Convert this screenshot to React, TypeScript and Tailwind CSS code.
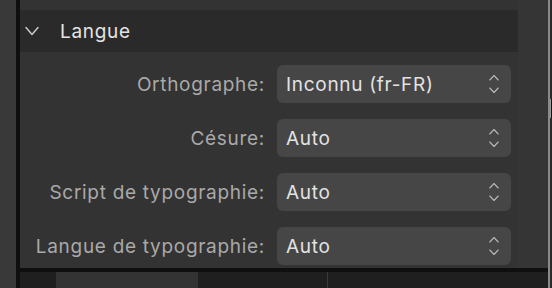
const rows = [
  { label: 'Orthographe:', value: 'Inconnu (fr-FR)' },
  { label: 'Césure:', value: 'Auto' },
  { label: 'Script de typographie:', value: 'Auto' },
  { label: 'Langue de typographie:', value: 'Auto' },
];

function Stepper() {
  return (
    <svg width="10" height="20" viewBox="0 0 10 20" fill="none" stroke="#b8b8b8" strokeWidth="1.1" strokeLinecap="round" strokeLinejoin="round">
      <path d="M0.8 6 L5 1.5 L9.2 6" />
      <path d="M0.8 14 L5 18.5 L9.2 14" />
    </svg>
  );
}

export default function App() {
  return (
    <div
      className="flex w-[552px] h-[288px] overflow-hidden bg-[#1e1e1e] text-[19px]"
      style={{ fontFamily: 'Inter, "Noto Sans", sans-serif' }}
    >
      <div className="w-[16px] shrink-0 bg-[#393939]" />
      <div className="w-[4px] shrink-0 bg-[#0f0f0f]" />
      <div className="flex flex-col w-[528px] shrink-0">
        <div className="flex h-[268px] bg-[#333333]">
          <div className="w-[498px] pt-[10px]">
            <div className="flex items-center h-[42px] bg-[#2a2a2a]">
              <svg className="ml-[5px]" width="14" height="10" viewBox="0 0 14 10" fill="none" stroke="#cfcfcf" strokeWidth="1.4" strokeLinecap="round" strokeLinejoin="round">
                <path d="M1 1.5 L7 8.5 L13 1.5" />
              </svg>
              <span className="ml-[21px] pt-[2px] text-[19px] text-[#e4e4e4] tracking-[0.7px]">Langue</span>
            </div>
            <div className="grid grid-cols-[245px_234px] gap-x-[12px] gap-y-[16px] mt-[13px]">
              {rows.map((r) => (
                <div key={r.label} className="contents">
                  <div className="flex items-center justify-end h-[38px] pt-[2px] text-[#a9a9a9] tracking-[0.7px]">
                    {r.label}
                  </div>
                  <div className="flex items-center justify-between h-[38px] rounded-[6px] bg-[#464646] pl-[9px] pr-[12px] text-[#e2e2e2] tracking-[0.7px]">
                    <span className="pt-[2px]">{r.value}</span>
                    <Stepper />
                  </div>
                </div>
              ))}
            </div>
          </div>
          <div className="w-[30px] bg-[#353535]" />
        </div>
        <div className="h-[4px] bg-[#0f0f0f]" />
        <div className="flex h-[16px] bg-[#1f1f1f]">
          <div className="w-[36px]" />
          <div className="w-[142px] bg-[#333333]" />
          <div className="w-[130px] border-r border-[#3a3a3a]" />
        </div>
      </div>
      <div className="w-[2px] shrink-0 bg-[#8a8a8a]" />
      <div className="flex-1 flex flex-col bg-[#2a2a2a]">
        <div className="h-[99px]" />
        <div className="h-[19px] bg-[#151515] border-l border-[#9a9a9a]" />
      </div>
    </div>
  );
}
